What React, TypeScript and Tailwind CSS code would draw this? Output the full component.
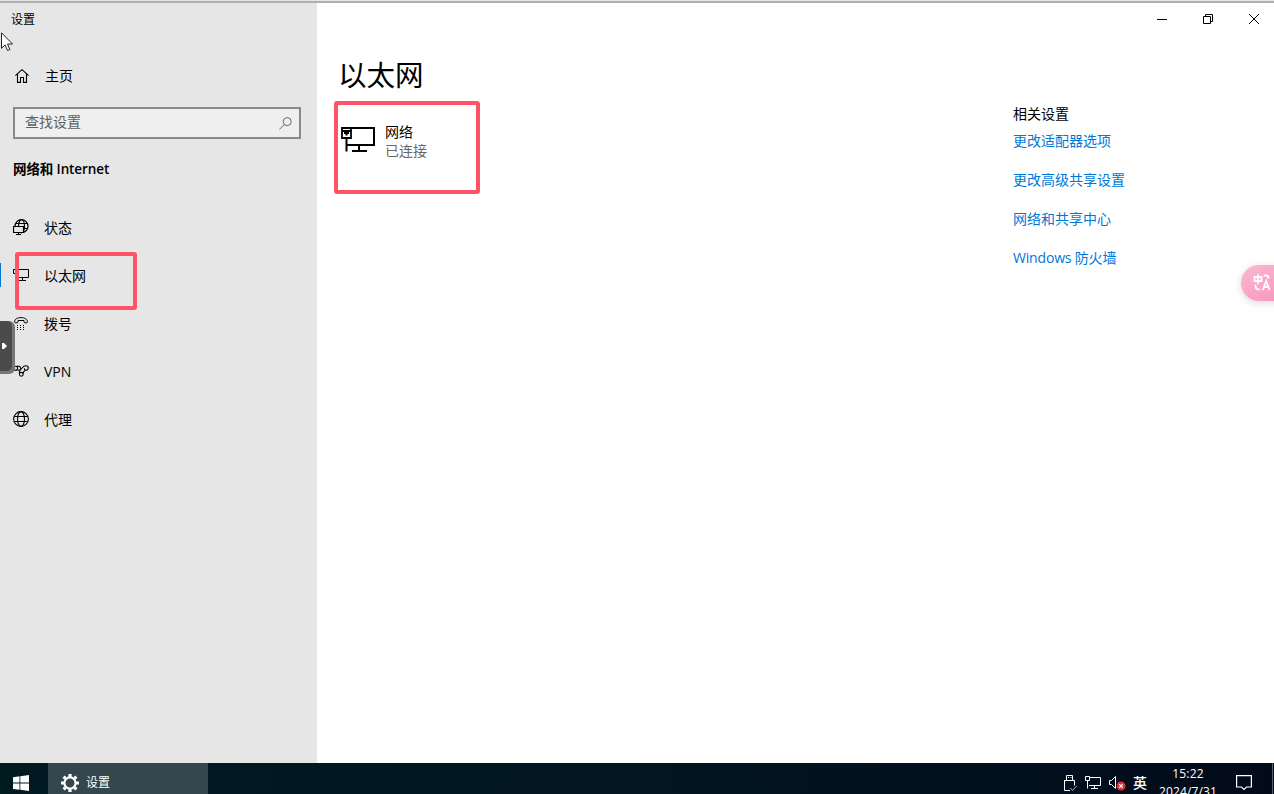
import React from 'react';

interface NavItem {
  label: string;
  icon: React.ReactNode;
  active?: boolean;
}

const StatusIcon = () => (
  <svg width="16" height="17" viewBox="0 0 16 17" fill="none" stroke="#000" strokeWidth="1.200">
    <circle cx="8.500" cy="7.200" r="6.500" />
    <ellipse cx="8.500" cy="7.200" rx="3" ry="6.500" />
    <path d="M2.300 4.500h12.400M2.300 9.500h12.400" />
    <path d="M.5 7.500h10v6H.5z" fill="#e6e6e6" />
    <path d="M5.500 13.500v2M3 15.500h5" />
  </svg>
);

const EthernetIcon = () => (
  <svg width="16" height="14" viewBox="0 0 16 14" fill="none" stroke="#000" strokeWidth="1">
    <path d="M5 1.500h10.500v8H4M9.500 9.500v3M6 12.500h7" />
    <path d="M.5 1.500h4v4h-4zM2.500 5.500v7" />
  </svg>
);

const DialIcon = () => (
  <svg width="14" height="13" viewBox="0 0 14 13">
    <path
      d="M.6 4.800C.6 2.300 3 .6 7 .6s6.400 1.700 6.400 4.200c0 .7-.3 1-.9 1H11c-.7 0-1-.4-1-1.100V3.500H4v1.200c0 .7-.3 1.100-1 1.100H1.500c-.6 0-.9-.3-.9-1z"
      fill="none"
      stroke="#000"
    />
    <path d="M3 8h1v1H3zM6 8h1v1H6zM9 8h1v1H9zM3 10h1v1H3zM6 10h1v1H6zM9 10h1v1H9zM3 12h1v1H3zM6 12h1v1H6zM9 12h1v1H9z" />
  </svg>
);

const VpnIcon = () => (
  <svg width="16" height="12" viewBox="0 0 16 12" fill="none" stroke="#000" strokeWidth="1.100">
    <circle cx="2.600" cy="3.300" r="2" />
    <circle cx="8.300" cy="9.300" r="1.900" />
    {/* ribbon running from the left ring through the right loop */}
    <path d="M3.500 1.500C5.500.6 8 1.800 7.800 3.500 7.500 5.500 5.500 6 6.500 8.800" />
    <path d="M4.300 4.800C6.500 6 8 4.500 9.200 3 10.400 1.300 11.600.8 12.800.8c1.500 0 2.500 1 2.500 2.300s-1.200 2.300-2.700 2.100c-1.200-.2-1.500-1.200-.8-1.900" />
    <path d="M10 8.700c.3-1.500.7-2.500 2-3.200" />
  </svg>
);

const GlobeIcon = () => (
  <svg width="16" height="16" viewBox="0 0 16 16" fill="none" stroke="#000" strokeWidth="1.100">
    <circle cx="8" cy="8" r="7.400" />
    <ellipse cx="8" cy="8" rx="3.500" ry="7.400" />
    <path d="M1.400 5.500h13.200M1.400 10.500h13.200" />
  </svg>
);

const navItems: NavItem[] = [
  { label: '状态', icon: <StatusIcon /> },
  { label: '以太网', icon: <EthernetIcon />, active: true },
  { label: '拨号', icon: <DialIcon /> },
  { label: 'VPN', icon: <VpnIcon /> },
  { label: '代理', icon: <GlobeIcon /> },
];

const relatedLinks = ['更改适配器选项', '更改高级共享设置', '网络和共享中心', 'Windows 防火墙'];

const Sidebar = () => (
  <aside className="w-[317px] shrink-0 bg-[#e6e6e6]">
    <div className="h-[34px] pl-[11px] text-xs leading-[34px]">设置</div>
    <div className="mt-6 flex h-[30px] items-center pl-[15px]">
      <svg width="14" height="14" viewBox="0 0 14 14" fill="none" stroke="#000" strokeWidth="1.100">
        <path d="M.4 6.700 7 .7l6.600 6M2.500 5v8.400h3V8.500h3v4.900h3V5" />
      </svg>
      <span className="ml-4 text-sm">主页</span>
    </div>
    <div className="mt-4 ml-[13px] flex h-8 w-[288px] items-center justify-between border-2 border-[#8a8a8a] bg-[#efefef] pr-[7px] pl-[10px] text-sm text-[#606060]">
      <span className="pb-[2px]">查找设置</span>
      <svg width="13" height="13" viewBox="0 0 13 13" fill="none" stroke="#6a6a6a" strokeWidth="1">
        <circle cx="8.200" cy="4.600" r="4" />
        <path d="M5.300 7.500.4 12.400" />
      </svg>
    </div>
    <h2 className="mt-5 ml-[13px] h-5 text-[13.500px] leading-5 font-semibold tracking-[-0.1px]">网络和 Internet</h2>
    <nav className="mt-6">
      {navItems.map(item => (
        <div key={item.label} className="flex h-12 items-center">
          <span className={item.active ? 'h-6 w-px bg-[#0078d7]' : 'h-6 w-px'} />
          <span className="ml-3 flex w-4 justify-center">{item.icon}</span>
          <span className="ml-[15px] pt-px text-sm">{item.label}</span>
        </div>
      ))}
    </nav>
  </aside>
);

const WindowControls = () => (
  <div className="flex h-8 items-center justify-end gap-9 pr-[15px]">
    <svg width="10" height="10" viewBox="0 0 10 10" stroke="#000">
      <path d="M0 5.500h10" />
    </svg>
    <svg width="10" height="10" viewBox="0 0 10 10" fill="none" stroke="#000">
      <path d="M.5 2.500h7v7h-7zM2.500 2.500v-2h7v7h-2" />
    </svg>
    <svg width="10" height="10" viewBox="0 0 10 10" stroke="#000">
      <path d="M0 0l10 10M10 0 0 10" />
    </svg>
  </div>
);

const Content = () => (
  <main className="flex-1 bg-white">
    <WindowControls />
    <div className="flex justify-between">
      <div className="pl-[21px]">
        <h1 className="mt-5 text-[28.500px] leading-10">以太网</h1>
        <div className="mt-[27px] flex pl-[3px]">
          <svg width="34" height="26" viewBox="0 0 34 26" fill="none" stroke="#000" strokeWidth="2" className="mt-1">
            <path d="M10 2h23v17H6M18 19v5M11 25h15M5.500 12v13.500" />
            <path d="M1 2h9v10H1zM1 5h9" strokeWidth="1.800" />
            <path d="M3 6h5v2H6.500v1.500h-2V8H3z" fill="#000" stroke="none" />
          </svg>
          <div className="ml-[10px] text-sm leading-[19px]">
            <p>网络</p>
            <p className="text-[#666]">已连接</p>
          </div>
        </div>
      </div>
      <aside className="mt-[69px] w-[261px] text-sm">
        <h3 className="leading-5">相关设置</h3>
        <ul className="mt-[7px] flex flex-col gap-[19px]">
          {relatedLinks.map(link => (
            <li key={link} className="leading-5 text-[#0078d7] last:tracking-[-0.18px]">{link}</li>
          ))}
        </ul>
      </aside>
    </div>
  </main>
);

const Taskbar = () => (
  <footer className="flex h-[31px] shrink-0 overflow-hidden bg-linear-to-r from-[#001a22] via-[#021620] to-[#020b1a] text-xs text-white">
    <div className="flex w-12 justify-center pt-3 pr-[6px]">
      <svg width="16" height="16" viewBox="0 0 16 16" fill="#fff">
        <path d="M0 2.200 6.500 1.300v6.200H0zM7.300 1.200 16 0v7.500H7.300zM0 8.500h6.500v6.300L0 13.900zM7.300 8.500H16V16l-8.700-1.200z" />
      </svg>
    </div>
    <div className="flex w-40 bg-[#34464e] pl-[13px]">
      <svg width="18" height="18" viewBox="0 0 18 18" className="mt-[11px]">
        <circle cx="9" cy="9" r="5.600" fill="none" stroke="#fff" strokeWidth="2.200" />
        <path
          d="M9 0v3M9 15v3M0 9h3M15 9h3M2.640 2.640l1.700 1.700M13.660 13.660l1.700 1.700M15.360 2.640l-1.700 1.700M4.340 13.660l-1.700 1.700"
          stroke="#fff"
          strokeWidth="3.200"
        />
      </svg>
      <span className="ml-[7px] pt-[11px] leading-[18px]">设置</span>
    </div>
    <div className="ml-auto flex">
      {/* USB eject */}
      <svg width="14" height="17" viewBox="0 0 14 17" fill="none" stroke="#fff" className="mt-3">
        <path d="M3.500 5V.5h6V5M1.500 5.500h10v5M1.500 5v10.500H7M5 2.500h1M7.500 2.500h1" />
        <path d="M7.500 13l2 2.500 4-4.500" stroke="#aab0b5" />
      </svg>
      <svg width="16" height="14" viewBox="0 0 16 14" fill="none" stroke="#fff" className="mt-[13px] ml-[8px]">
        <path d="M5 1.500h10.500v8H4M9.500 9.500v3M6 12.500h7M.5 .5h4v4h-4zM2.500 4.500v8" />
      </svg>
      {/* muted volume */}
      <svg width="17" height="16" viewBox="0 0 17 16" fill="none" className="mt-[12px] ml-[8px]">
        <path d="M.5 5.500h2L6.500 1.500v12l-4-4h-2z" stroke="#fff" />
        <circle cx="12" cy="11" r="4.500" fill="#e02c2c" />
        <path d="M10.200 9.200l3.600 3.600M13.800 9.200l-3.600 3.600" stroke="#fff" strokeWidth="1.200" />
      </svg>
      <span className="ml-[7px] w-[15px] pt-[11px] text-[14px] leading-[18px] font-medium">英</span>
      <div className="ml-[5px] w-[70px] text-center leading-4 tracking-[0.15px]">
        <p className="pt-[3px]">15:22</p>
        <p className="pt-[2px]">2024/7/31</p>
      </div>
      <svg width="16" height="16" viewBox="0 0 16 16" fill="none" stroke="#fff" strokeWidth="1.200" className="mt-[12px] ml-[13px]">
        <path d="M.6 .6h14.800v11.400H10.500L8 14.500 5.500 12H.6z" />
      </svg>
      <span className="ml-5 h-full w-px bg-[#596069]" />
      <span className="w-px" />
    </div>
  </footer>
);

export default function App() {
  return (
    <div className="relative flex h-[794px] w-[1274px] flex-col overflow-hidden bg-white font-['Open_Sans','Noto_Sans_CJK_SC',sans-serif] text-black">
      <div className="h-[3px] shrink-0 border-b-2 border-[#b0b0b0] bg-[#e6e6e6]" />
      <div className="flex min-h-0 flex-1">
        <Sidebar />
        <Content />
      </div>
      <Taskbar />

      {/* Highlight boxes */}
      <div className="absolute top-[101px] left-[334px] h-[93px] w-[146px] rounded-[3px] border-4 border-[#ff5468]" />
      <div className="absolute top-[252px] left-[15px] h-[58px] w-[122px] rounded-[3px] border-4 border-[#ff5468]" />

      {/* Drawer handle */}
      <div className="absolute top-[321px] left-0 h-[53px] w-[15px] rounded-r-md bg-[#777]">
        <div className="flex h-[50px] w-3 items-center rounded-r-[5px] bg-[#4b4b4b] pl-[2px]">
          <svg width="5" height="6" viewBox="0 0 5 6" fill="#fff">
            <path d="M0 0h2l3 3-3 3H0z" />
          </svg>
        </div>
      </div>

      {/* Translate button */}
      <div className="absolute top-[265px] left-[1241px] flex h-9 w-[60px] items-center rounded-full bg-linear-to-br from-[#fbb8d2] to-[#f78fba] pb-[2px] pl-3 shadow-[0_2px_8px_rgba(0,0,0,0.15)]">
        <svg width="18" height="17" viewBox="0 0 18 17" fill="none" stroke="#fff" strokeWidth="1.800" strokeLinecap="round">
          <path d="M1.500 3h7v4h-7zM5 .9v8.600M11.500 1.500h1.500Q15.500 1.500 15.500 4M2.500 11.500Q2.500 15.500 6 15.500M10 15.500l3.200-8.500 3.200 8.500M11 13h4.400" />
        </svg>
      </div>

      {/* Mouse pointer */}
      <svg width="13" height="20" viewBox="0 0 13 20" className="absolute top-[32px] left-px">
        <path d="M.5 .8v15.500l3.600-3.400 2.400 5.600 2.400-1-2.400-5.500h5z" fill="#fff" stroke="#223" strokeWidth="1" />
      </svg>
    </div>
  );
}
